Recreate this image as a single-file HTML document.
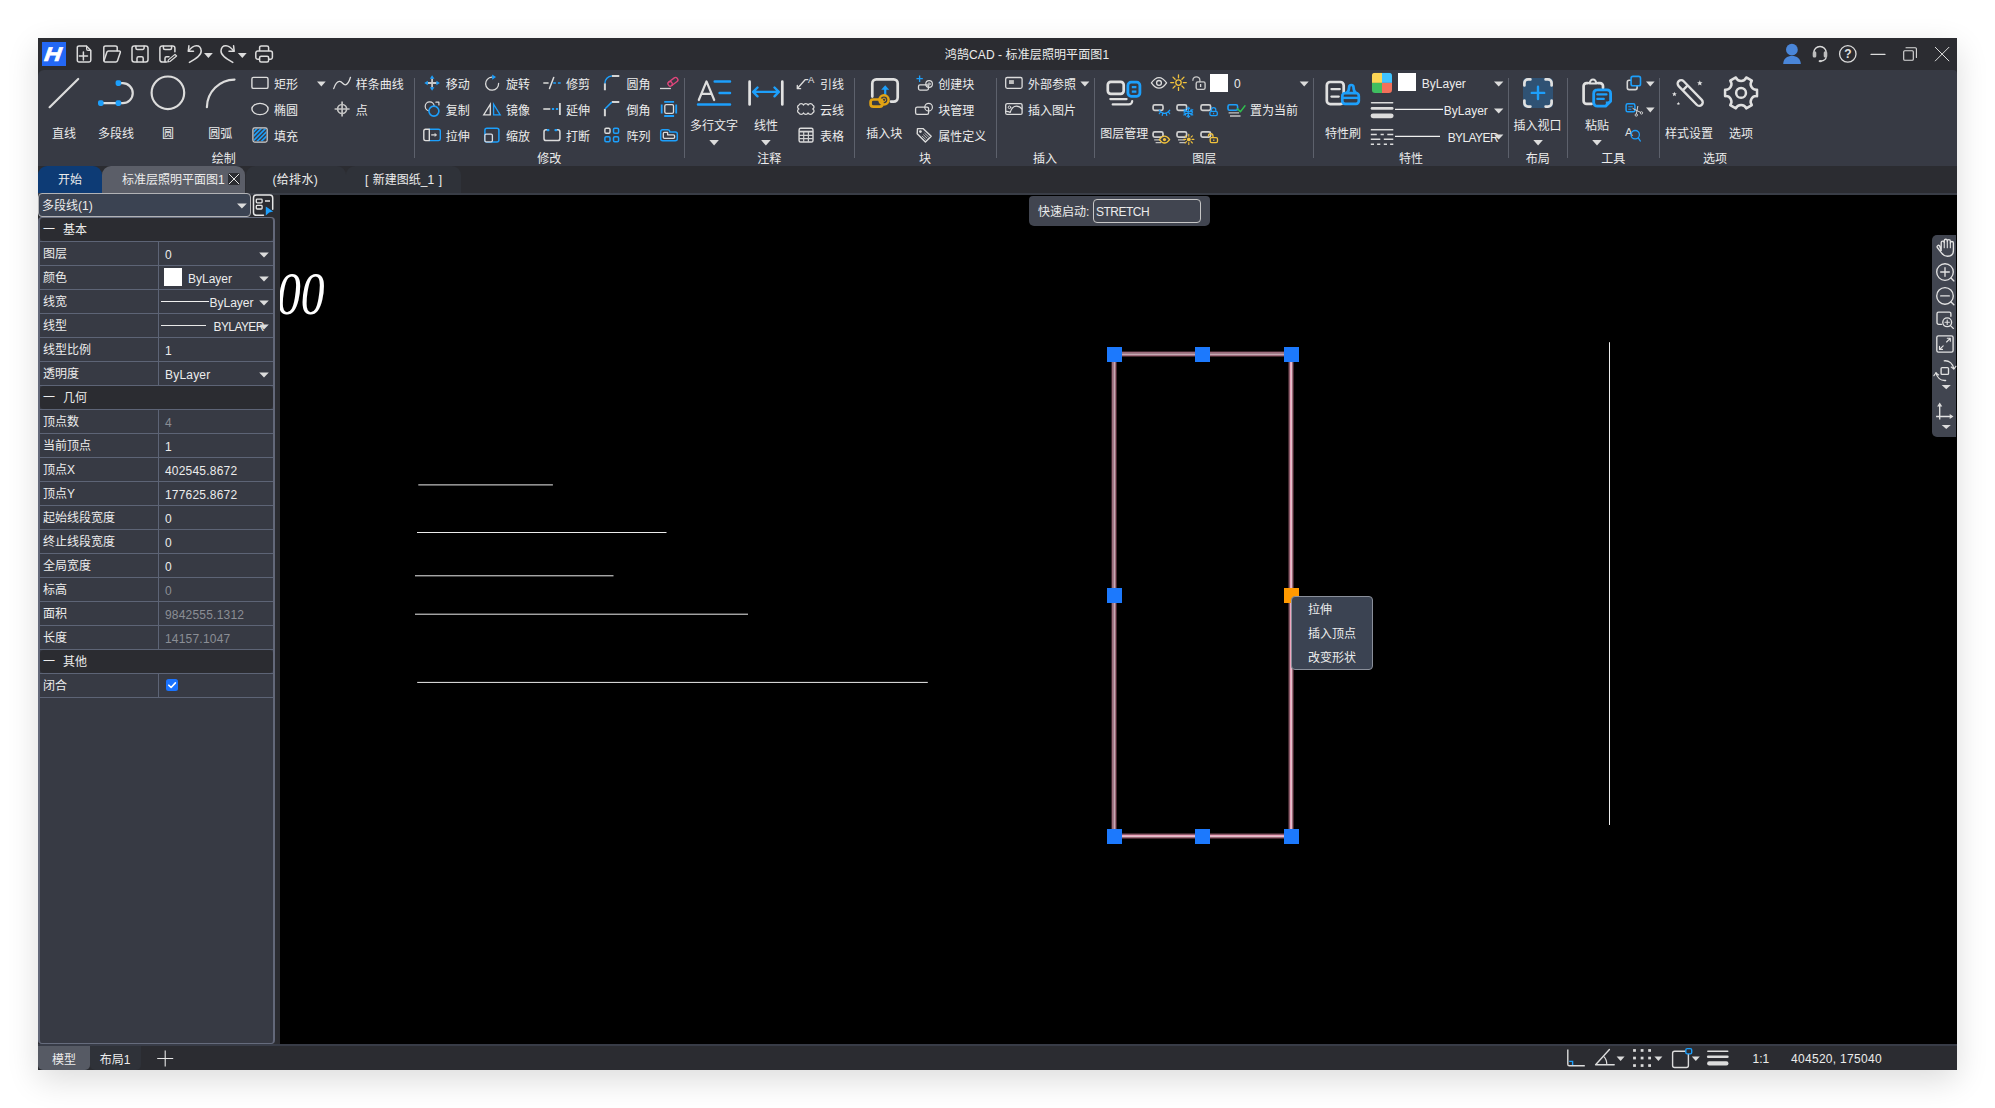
<!DOCTYPE html>
<html lang="zh-CN">
<head>
<meta charset="utf-8">
<title>鸿鹄CAD - 标准层照明平面图1</title>
<style>
html,body{margin:0;padding:0}
body{width:1995px;height:1108px;position:relative;overflow:hidden;background:#fff;
 font-family:"Liberation Sans","Noto Sans CJK SC",sans-serif;font-size:12px;color:#e9e9e9}
.abs,.t,.tc{position:absolute}
.t,.tc{white-space:nowrap;line-height:16px;height:16px;font-size:12px;color:#ececec}
.tc{transform:translateX(-50%)}
#shadow{position:absolute;left:38px;top:38px;width:1919px;height:1032px;background:#2b2c31;
 box-shadow:0 10px 30px rgba(0,0,0,.14)}
#titlebar{position:absolute;left:38px;top:38px;width:1919px;height:32px;background:#2b2c31}
#ribbon{position:absolute;left:38px;top:70px;width:1919px;height:96px;background:#373a44;border-radius:6px 4px 0 0}
#tabbar{position:absolute;left:38px;top:166px;width:1919px;height:27px;background:#2b2c31}
#strip{position:absolute;left:38px;top:193px;width:1919px;height:2px;background:#393d46}
#canvas{position:absolute;left:280px;top:195px;width:1677px;height:849px;background:#000;overflow:hidden}
#leftbg{position:absolute;left:38px;top:193px;width:242px;height:851px;background:#2b2c31}
#statusline{position:absolute;left:38px;top:1044px;width:1919px;height:2px;background:#383c47}
#status{position:absolute;left:38px;top:1046px;width:1919px;height:24px;background:#2b2c31}
svg{position:absolute;left:0;top:0;overflow:visible}
.sep{position:absolute;top:78px;width:1px;height:80px;background:#5d616c}
.g{fill:none;stroke:#dcdcdc;stroke-width:1.4;stroke-linecap:round;stroke-linejoin:round}
.b{fill:none;stroke:#1d9ffb;stroke-width:1.4;stroke-linecap:round;stroke-linejoin:round}
.y{fill:none;stroke:#f2c33c;stroke-width:1.3;stroke-linecap:round;stroke-linejoin:round}
.fg{fill:#dcdcdc;stroke:none}
.fb{fill:#1d9ffb;stroke:none}
.fy{fill:#f2c33c;stroke:none}
.tri{fill:#dcdcdc;stroke:none}
</style>
</head>
<body>
<div id="shadow"></div>
<div id="titlebar"></div>
<div id="ribbon"></div>
<div id="tabbar"></div>
<div id="leftbg"></div>
<div id="strip"></div>
<div id="canvas">
 <div class="abs" id="cadtext" style="left:-3px;top:68px;font-family:'Liberation Serif',serif;font-style:italic;font-size:61px;line-height:61px;color:#fff;transform:scaleX(.78);transform-origin:0 0;white-space:nowrap">00</div>
</div>
<div id="statusline"></div>
<div id="status"></div>

<!-- ===== title bar ===== -->
<div class="abs" style="left:42px;top:42px;width:24px;height:24px;background:#2468f4;overflow:hidden">
 <div class="abs" style="left:1px;top:-1px;width:20px;text-align:center;font:italic bold 20px/26px 'Liberation Sans',sans-serif;color:#fff;-webkit-text-stroke:.7px #fff;transform:scaleX(1.17) skewX(-6deg)">H</div>
</div>
<div class="tc" style="left:1027px;top:47px;letter-spacing:.1px">鸿鹄CAD - 标准层照明平面图1</div>
<svg width="1995" height="1108" viewBox="0 0 1995 1108" style="pointer-events:none">
<g class="g" style="stroke-width:1.5">
 <!-- new -->
 <path d="M79,45.9h7.4l4.4,4.6v9.8a1.7,1.7 0 0 1 -1.7,1.7h-10.1a1.7,1.7 0 0 1 -1.7,-1.7v-12.7a1.7,1.7 0 0 1 1.7,-1.7z"/>
 <path d="M86.6,46.2v2.9a1.3,1.3 0 0 0 1.3,1.3h2.6" style="stroke-width:1.2"/>
 <path d="M79.3,56h8.2M83.4,51.9v8.2"/>
 <!-- open -->
 <path d="M103.8,60.5v-12.9a1.7,1.7 0 0 1 1.7,-1.7h10a1.7,1.7 0 0 1 1.7,1.7v3.2"/>
 <path d="M108.6,50.9h10.6a1.2,1.2 0 0 1 1.1,1.6l-2.8,8.3a1.8,1.8 0 0 1 -1.7,1.2h-10.6a1.2,1.2 0 0 1 -1.1,-1.6l2.8,-8.3a1.8,1.8 0 0 1 1.7,-1.2z"/>
 <!-- save -->
 <rect x="132" y="45.9" width="16" height="16.1" rx="2.2"/>
 <path d="M135.9,46.2v1.8a1.5,1.5 0 0 0 1.5,1.5h5.2a1.5,1.5 0 0 0 1.5,-1.5v-1.8"/>
 <path d="M137,61.8v-3.6a1.5,1.5 0 0 1 1.5,-1.5h3.2a1.5,1.5 0 0 1 1.5,1.5v3.6"/>
 <!-- save as -->
 <path d="M166.5,62h-4.4a2.2,2.2 0 0 1 -2.2,-2.2v-11.7a2.2,2.2 0 0 1 2.2,-2.2h10.6a2.2,2.2 0 0 1 2.2,2.2v3.6"/>
 <path d="M163.4,46.2v1.8a1.5,1.5 0 0 0 1.5,1.5h5.2a1.5,1.5 0 0 0 1.5,-1.5v-1.8"/>
 <path d="M165,61.8v-3.6a1.5,1.5 0 0 1 1.5,-1.5h2.5"/>
 <path d="M175,54.4l1.6,1.6l-6.6,5.5l-2.2,0.5l0.6,-2.1z" style="stroke-width:1.2"/>
 <!-- undo -->
 <path d="M189.4,62.4C196.5,58.2 201.6,55 201.2,50.8C200.9,47.4 198.6,45.7 196.2,45.8C193,45.9 190.2,48.8 188.5,51"/>
 <path d="M188.9,45.8l-0.6,5.5h5.2"/>
 <!-- redo -->
 <path d="M232.8,62.4C225.7,58.2 220.6,55 221,50.8C221.3,47.4 223.6,45.7 226,45.8C229.2,45.9 232,48.8 233.7,51"/>
 <path d="M233.6,45.8l0.6,5.5h-5.2"/>
 <!-- print -->
 <path d="M259.6,50.6v-3a1.7,1.7 0 0 1 1.7,-1.7h5.6a1.7,1.7 0 0 1 1.7,1.7v3"/>
 <path d="M259.4,59.3h-1.5a2.1,2.1 0 0 1 -2.1,-2.1v-4.2a2.1,2.1 0 0 1 2.1,-2.1h12.4a2.1,2.1 0 0 1 2.1,2.1v4.2a2.1,2.1 0 0 1 -2.1,2.1h-1.5"/>
 <rect x="259.6" y="56.2" width="9" height="5.8" rx="1.5"/>
</g>
<path class="tri" d="M204,53h8.8l-4.4,5z"/>
<path class="tri" d="M237.9,53h8.8l-4.4,5z"/>
<!-- right controls -->
<circle cx="1791.9" cy="49.7" r="5.9" fill="#4a86d8"/>
<path d="M1783.2,63.9c0.2,-5.4 3.8,-8 8.8,-8s8.600,2.600 8.800,8z" fill="#4a86d8"/>
<g class="g" style="stroke-width:1.4">
 <path d="M1813.800,54.5v-1.800a6.200,6.200 0 0 1 12.400,0v1.800"/>
 <path d="M1826.200,56.500c0,3 -2.500,4.300 -5.600,4.700" style="stroke-width:1.2"/>
</g>
<rect class="fg" x="1812.700" y="51.200" width="3.600" height="6.300" rx="1.500" style="fill:#bdbdbd"/>
<rect class="fg" x="1823.700" y="51.200" width="3.600" height="6.300" rx="1.500" style="fill:#bdbdbd"/>
<ellipse class="fg" cx="1820.300" cy="61.200" rx="1.700" ry="1.100" style="fill:#cfcfcf"/>
<circle class="g" cx="1847.800" cy="53.900" r="8.200" style="stroke-width:1.300"/>
<path class="g" d="M1871,54.400h14" style="stroke-width:1.100"/>
<rect class="g" x="1903.700" y="50.700" width="9.600" height="9.600" rx="1" style="stroke-width:1.100"/>
<path class="g" d="M1906,47.800h9.400a1,1 0 0 1 1,1v8.600" style="stroke-width:1.100"/>
<path class="g" d="M1935.300,47.300l13.600,13.600M1948.900,47.300l-13.600,13.600" style="stroke-width:1"/>
</svg>
<div class="tc" style="left:1847.800px;top:46px;font-weight:bold;font-size:12px;color:#e0e0e0">?</div>
<!-- ===== ribbon labels ===== -->
<div class="t" style="left:274px;top:77px">矩形</div>
<div class="t" style="left:274px;top:103px">椭圆</div>
<div class="t" style="left:274px;top:129px">填充</div>
<div class="t" style="left:355.8px;top:77px">样条曲线</div>
<div class="t" style="left:355.8px;top:103px">点</div>
<div class="t" style="left:445.8px;top:77px">移动</div>
<div class="t" style="left:445.8px;top:103px">复制</div>
<div class="t" style="left:445.8px;top:129px">拉伸</div>
<div class="t" style="left:506px;top:77px">旋转</div>
<div class="t" style="left:506px;top:103px">镜像</div>
<div class="t" style="left:506px;top:129px">缩放</div>
<div class="t" style="left:566px;top:77px">修剪</div>
<div class="t" style="left:566px;top:103px">延伸</div>
<div class="t" style="left:566px;top:129px">打断</div>
<div class="t" style="left:626.4px;top:77px">圆角</div>
<div class="t" style="left:626.4px;top:103px">倒角</div>
<div class="t" style="left:626.4px;top:129px">阵列</div>
<div class="t" style="left:820px;top:77px">引线</div>
<div class="t" style="left:820px;top:103px">云线</div>
<div class="t" style="left:820px;top:129px">表格</div>
<div class="t" style="left:938.2px;top:77px">创建块</div>
<div class="t" style="left:938.2px;top:103px">块管理</div>
<div class="t" style="left:938.2px;top:129px">属性定义</div>
<div class="t" style="left:1028px;top:77px">外部参照</div>
<div class="t" style="left:1028px;top:103px">插入图片</div>
<div class="t" style="left:1250px;top:103px">置为当前</div>
<div class="t" style="left:1234px;top:76px">0</div>
<div class="t" style="left:1421.8px;top:76px">ByLayer</div>
<div class="t" style="left:1443.8px;top:103px">ByLayer</div>
<div class="t" style="left:1447.7px;top:130px;letter-spacing:-0.600px">BYLAYER</div>
<div class="tc" style="left:64px;top:126px">直线</div>
<div class="tc" style="left:116px;top:126px">多段线</div>
<div class="tc" style="left:168px;top:126px">圆</div>
<div class="tc" style="left:220.2px;top:126px">圆弧</div>
<div class="tc" style="left:714px;top:118px">多行文字</div>
<div class="tc" style="left:766px;top:118px">线性</div>
<div class="tc" style="left:884.2px;top:126px">插入块</div>
<div class="tc" style="left:1124.3px;top:126px">图层管理</div>
<div class="tc" style="left:1343px;top:126px">特性刷</div>
<div class="tc" style="left:1537.5px;top:118px">插入视口</div>
<div class="tc" style="left:1597px;top:118px">粘贴</div>
<div class="tc" style="left:1689px;top:126px">样式设置</div>
<div class="tc" style="left:1741px;top:126px">选项</div>
<div class="tc" style="left:223.8px;top:151px">绘制</div>
<div class="tc" style="left:549.2px;top:151px">修改</div>
<div class="tc" style="left:769.2px;top:151px">注释</div>
<div class="tc" style="left:925px;top:151px">块</div>
<div class="tc" style="left:1044.9px;top:151px">插入</div>
<div class="tc" style="left:1204.3px;top:151px">图层</div>
<div class="tc" style="left:1411px;top:151px">特性</div>
<div class="tc" style="left:1537.8px;top:151px">布局</div>
<div class="tc" style="left:1613.2px;top:151px">工具</div>
<div class="tc" style="left:1715px;top:151px">选项</div>
<div class="sep" style="left:414px"></div>
<div class="sep" style="left:684px"></div>
<div class="sep" style="left:854px"></div>
<div class="sep" style="left:996px"></div>
<div class="sep" style="left:1094px"></div>
<div class="sep" style="left:1313px"></div>
<div class="sep" style="left:1508px"></div>
<div class="sep" style="left:1567px"></div>
<div class="sep" style="left:1659px"></div>
<!-- ===== ribbon icons: draw ===== -->
<svg width="1995" height="1108" viewBox="0 0 1995 1108" style="pointer-events:none">
<g class="g" style="stroke-width:2.2">
 <path d="M49.600,107.200L78.200,79"/>
 <path d="M118.500,83.200h4.300a9.950,9.950 0 0 1 0,19.900h-22"/>
 <circle cx="167.900" cy="92.800" r="16.300"/>
 <path d="M206.900,107.200a27.900,27.900 0 0 1 27.600,-27.600"/>
</g>
<rect class="fb" x="115.600" y="80.300" width="5.600" height="5.600" rx="1.800"/>
<rect class="fb" x="115.600" y="100.300" width="5.600" height="5.600" rx="1.800"/>
<rect class="fb" x="98" y="100.300" width="5.600" height="5.600" rx="1.800"/>
<g class="g">
 <rect x="251.900" y="77.400" width="16.100" height="11" rx="1.500"/>
 <ellipse cx="260" cy="109" rx="8.100" ry="5.600"/>
 <path d="M333.700,88.600c1.500,-4.500 3.600,-7.500 6,-7.300c2.600,0.200 3.400,3.600 5.600,3.500c2.400,-0.100 4,-3.500 5.200,-7.500" style="stroke-width:1.300"/>
</g>
<g class="g" style="stroke:#c4c4c4;stroke-width:1.700;stroke-linecap:butt">
 <circle cx="342.100" cy="109" r="4.500"/>
 <path d="M334.600,109h15M342.100,101.500v15"/>
</g>
<!-- hatch -->
<clipPath id="hc"><rect x="253.700" y="128.600" width="12.700" height="12.700" rx="1"/></clipPath>
<g clip-path="url(#hc)" style="stroke:#1d9ffb;stroke-width:1.700;fill:none">
 <path d="M244,141.500l14,-14M248.300,141.500l14,-14M252.600,141.500l14,-14M256.900,141.500l14,-14M261.200,141.500l14,-14"/>
</g>
<rect x="252.900" y="127.800" width="14.300" height="14.300" rx="1.800" style="fill:none;stroke:#cfcfcf;stroke-width:1.200"/>
<path class="tri" d="M317,81.600h8.700l-4.350,5z"/>
</svg>
<!-- ===== ribbon icons: modify ===== -->
<svg width="1995" height="1108" viewBox="0 0 1995 1108" style="pointer-events:none">
<!-- move -->
<path d="M427.600,83h9M432.100,78.500v9" style="stroke:#c8c8c8;stroke-width:1.800;fill:none"/>
<path class="fb" d="M432.100,75.200l2.300,3.500h-4.600zM432.100,90.800l2.300,-3.500h-4.600zM424.300,83l3.500,-2.300v4.600zM439.900,83l-3.500,-2.300v4.600z"/>
<!-- copy -->
<circle class="g" cx="429.700" cy="106.300" r="4.500" style="stroke-width:1.200"/>
<path class="g" d="M435.900,102.200h3v2.800" style="stroke-width:1.200"/>
<circle cx="433.900" cy="111.100" r="5" style="fill:#373a44;stroke:#1d9ffb;stroke-width:1.600"/>
<!-- stretch -->
<path class="b" d="M429.300,129.300h9.200a1.800,1.800 0 0 1 1.800,1.800v7.700a1.800,1.800 0 0 1 -1.800,1.800h-9.200"/>
<path class="g" d="M429.300,140.600h-3.700a1.800,1.800 0 0 1 -1.800,-1.800v-7.700a1.800,1.800 0 0 1 1.800,-1.800h3.700z"/>
<path d="M431.200,134.900h3.800" style="stroke:#cfcfcf;stroke-width:1.400;fill:none"/>
<path d="M434.600,132.700l2.600,2.200l-2.600,2.200z" style="fill:#cfcfcf"/>
<!-- rotate -->
<path class="g" d="M498.600,83.400a6.500,6.500 0 1 1 -6.800,-6.200" style="stroke-width:1.300"/>
<path class="fb" d="M492.200,74.600l3.800,2.500l-3.800,2.600z"/>
<!-- mirror -->
<path class="g" d="M490.300,104.200v10.700h-6.600z" style="stroke-width:1.300;stroke-linejoin:miter"/>
<path class="b" d="M493.600,104.200v10.700h6.600z" style="stroke-width:1.300;stroke-linejoin:miter"/>
<!-- scale -->
<rect class="b" x="484.900" y="128.300" width="14" height="13.600" rx="2" style="stroke-width:1.500"/>
<rect x="484.900" y="134.200" width="7.500" height="7.700" rx="1.300" style="fill:#373a44;stroke:#d8dde6;stroke-width:1.300"/>
<!-- trim -->
<path d="M543.300,83h5.300" style="stroke:#c8c8c8;stroke-width:1.700;fill:none"/>
<path d="M549.500,88.400l4.200,-11" style="stroke:#dcdcdc;stroke-width:1.500;fill:none;stroke-linecap:round"/>
<path d="M553.200,83h2.700M557.900,83h2.800" style="stroke:#1d9ffb;stroke-width:1.700;fill:none"/>
<!-- extend -->
<path d="M543.300,109h7" style="stroke:#c8c8c8;stroke-width:1.800;fill:none"/>
<path d="M551.900,109h2.200M555.900,109h2.200" style="stroke:#1d9ffb;stroke-width:1.800;fill:none"/>
<path d="M559.900,103v12" style="stroke:#d0d0d0;stroke-width:1.900;fill:none"/>
<!-- break -->
<path class="g" d="M548,129.800h-1.900a2.100,2.100 0 0 0 -2.100,2.100v6.600a2.100,2.100 0 0 0 2.100,2.100h11.700a2.100,2.100 0 0 0 2.100,-2.100v-6.600a2.100,2.100 0 0 0 -2.100,-2.100h-1.800" style="stroke-width:1.500"/>
<rect class="fb" x="546.600" y="128.900" width="2.900" height="2.300" rx="1"/>
<rect class="fb" x="554.400" y="128.900" width="2.900" height="2.300" rx="1"/>
<!-- fillet -->
<path d="M611.800,76.100h7.500M604.900,83.300v6.900" style="stroke:#d4d4d4;stroke-width:2;fill:none"/>
<path d="M604.900,83.300a7.200,7.200 0 0 1 6.900,-7.200" style="stroke:#1d9ffb;stroke-width:1.500;fill:none"/>
<!-- chamfer -->
<path d="M611.800,102.100h7.500M604.900,109v7.200" style="stroke:#d4d4d4;stroke-width:2;fill:none"/>
<path d="M604.900,109l6.900,-6.900" style="stroke:#1d9ffb;stroke-width:1.500;fill:none"/>
<!-- array -->
<rect class="g" x="604.900" y="128.300" width="5.100" height="5" rx="1.200" style="stroke-width:1.400"/>
<rect class="b" x="613.500" y="128.300" width="5.100" height="5" rx="1.200" style="stroke-width:1.500"/>
<rect class="b" x="604.900" y="136.800" width="5.100" height="5" rx="1.200" style="stroke-width:1.500"/>
<rect class="b" x="613.500" y="136.800" width="5.100" height="5" rx="1.200" style="stroke-width:1.500"/>
<!-- eraser -->
<path d="M660,88.500h10.900" style="stroke:#d4d4d4;stroke-width:1.300;fill:none"/>
<g transform="rotate(-37 672.900 81.800)" style="fill:none;stroke:#e2467c;stroke-width:1.300">
 <rect x="667.400" y="79.500" width="11" height="4.600" rx="2"/>
 <path d="M669.300,79.500a2.300,2.300 0 0 1 0,4.600"/>
</g>
<!-- offset -->
<rect class="g" x="664.800" y="104.600" width="8.700" height="8.700" rx="1.400" style="stroke-width:1.300"/>
<path d="M664.200,101.900h9.900M664.200,116h9.900M661.700,104.400v9.100M676.200,104.400v9.100" style="stroke:#1d9ffb;stroke-width:1.800;fill:none"/>
<!-- group -->
<path class="b" d="M662.700,129.700h5.200a1.800,1.800 0 0 1 1.700,1.300l0.300,1h5.400a2,2 0 0 1 2,2v4.700a2,2 0 0 1 -2,2h-12.600a2,2 0 0 1 -2,-2v-7a2,2 0 0 1 2,-2z" style="stroke-width:1.500"/>
<path class="g" d="M664.400,132.300h3.200v2.500h5.900a1.100,1.100 0 0 1 1.100,1.100v1.400a1.100,1.100 0 0 1 -1.100,1.100h-9.100a1.100,1.100 0 0 1 -1.100,-1.100v-3.900a1.100,1.100 0 0 1 1.100,-1.100z" style="stroke-width:1.300"/>
</svg>
<!-- ===== ribbon icons: annotate / block / insert ===== -->
<svg width="1995" height="1108" viewBox="0 0 1995 1108" style="pointer-events:none">
<!-- mtext -->
<path d="M698.800,100l7.700,-18.600l7.700,18.600M701.700,93.800h9.600" style="fill:none;stroke:#dedede;stroke-width:2.200;stroke-linejoin:round;stroke-linecap:round"/>
<path d="M714.700,81.500h15.300M719.600,93h10.400M698,104.400h32" style="fill:none;stroke:#1d9ffb;stroke-width:2.500;stroke-linecap:round"/>
<!-- linear dim -->
<path d="M749.600,81.700v22.800M782.300,81.700v22.800" style="fill:none;stroke:#e2e2e2;stroke-width:2.700;stroke-linecap:round"/>
<path d="M753.500,91.900h25M757.500,87.500l-4.300,4.400l4.300,4.400M774.500,87.500l4.300,4.400l-4.300,4.400" style="fill:none;stroke:#1d9ffb;stroke-width:2.400;stroke-linecap:round;stroke-linejoin:round"/>
<path class="tri" d="M709.300,140.100h9.600l-4.800,5.500z"/>
<path class="tri" d="M761.100,140.100h9.600l-4.800,5.500z"/>
<!-- leader -->
<path class="g" d="M797.600,88.300l7.500,-8.600h2.700" style="stroke-width:1.300"/>
<path class="g" d="M797.300,85.300v3.400h3.300" style="stroke-width:1.300"/>
<text x="808.100" y="82.900" style="font-family:'Liberation Sans',sans-serif;font-size:9.500px;fill:#e2e2e2">A</text>
<!-- cloud -->
<path class="g" d="M798.900,105.100a2.500,2.300 0 0 1 4.600,0a2.500,2.300 0 0 1 4.600,0a2.500,2.300 0 0 1 4.600,0a2.100,2.100 0 0 1 0,3.900a2.100,2.100 0 0 1 0,3.900a2.500,2.300 0 0 1 -4.600,0a2.500,2.300 0 0 1 -4.600,0a2.500,2.300 0 0 1 -4.600,0a2.100,2.100 0 0 1 0,-3.900a2.100,2.100 0 0 1 0,-3.900z" style="stroke-width:1.300"/>
<!-- table -->
<rect class="g" x="799.100" y="128.300" width="13.900" height="13.700" rx="1.600" style="stroke-width:1.400"/>
<path d="M799.100,131.600h13.900" style="stroke:#d6d6d6;stroke-width:1.800;fill:none"/>
<path d="M799.100,135.300h13.900M799.100,138.700h13.900M803.700,131.600v10.400M808.400,131.600v10.400" style="stroke:#d0d0d0;stroke-width:1.200;fill:none"/>
<!-- insert block -->
<path d="M872.300,96.600v-13.200a4,4 0 0 1 4,-4h17.400a4,4 0 0 1 4,4v14.200a4,4 0 0 1 -4,4h-2.800" style="fill:none;stroke:#e0e0e0;stroke-width:2.700;stroke-linecap:round"/>
<path d="M885.200,95v-6.500" style="fill:none;stroke:#1d9ffb;stroke-width:2.200"/>
<path d="M885.200,85.300l4,4.400h-8z" style="fill:#1d9ffb"/>
<rect x="870.600" y="99.500" width="11.800" height="7.100" rx="2.600" style="fill:none;stroke:#e2a313;stroke-width:2.700"/>
<circle cx="884" cy="99.800" r="4.600" style="fill:none;stroke:#e2a313;stroke-width:2.500"/>
<circle cx="884" cy="99.800" r="1.700" style="fill:none;stroke:#e2a313;stroke-width:1"/>
<!-- create block -->
<path d="M916.500,78.700h6.300M919.600,75.600v6.300" style="fill:none;stroke:#1d9ffb;stroke-width:1.300"/>
<rect class="g" x="918.500" y="84.900" width="10" height="5.200" rx="1.500" style="stroke-width:1.300"/>
<circle class="g" cx="929.100" cy="84" r="3.300" style="stroke-width:1.200"/>
<circle class="g" cx="929.100" cy="84" r="1.100" style="stroke-width:0.900"/>
<!-- block manager -->
<rect class="g" x="915.600" y="107.100" width="13" height="7.200" rx="1.600" style="stroke-width:1.300"/>
<circle class="g" cx="928.600" cy="107.200" r="3.800" style="stroke-width:1.200"/>
<!-- attribute tag -->
<path class="g" d="M917.500,128.600h5.500l8.200,7.600l-5.800,5.700l-8.200,-8.200z" style="stroke-width:1.400"/>
<circle cx="920.400" cy="131.600" r="1.400" class="fg"/>
<path d="M924.500,133.100l4.300,4M923.200,134.500l4.100,3.800M921.900,135.900l3.900,3.600" style="stroke:#d8d8d8;stroke-width:0.800;fill:none"/>
<!-- xref -->
<rect class="g" x="1005.700" y="77.500" width="16.400" height="10.800" rx="1.500" style="stroke-width:1.300"/>
<rect x="1009" y="80.100" width="4.900" height="3.900" style="fill:#bdbdbd"/>
<path class="tri" d="M1080.400,81.600h9l-4.500,5z"/>
<!-- image -->
<rect class="g" x="1005.700" y="103.600" width="16.400" height="10.800" rx="1.500" style="stroke-width:1.300"/>
<circle class="g" cx="1009.500" cy="107.300" r="1.300" style="stroke-width:1"/>
<path class="g" d="M1006,111.400c1.500,-0.200 3,0.400 4.200,1c1.200,-4 3.300,-6.300 6.200,-6.300c2.400,0 4.300,1.300 5.500,2.900" style="stroke-width:1.200"/>
</svg>
<!-- ===== ribbon icons: layers ===== -->
<svg width="1995" height="1108" viewBox="0 0 1995 1108" style="pointer-events:none">
<!-- layer manager -->
<rect x="1107.800" y="81.800" width="15.900" height="12" rx="3" style="fill:none;stroke:#e0e0e0;stroke-width:2.700"/>
<path d="M1110.300,99.100h16.300M1112.700,104.400h16.200a3.300,3.300 0 0 0 3.300,-3.300" style="fill:none;stroke:#e0e0e0;stroke-width:2.200;stroke-linecap:round"/>
<rect x="1127.900" y="82.200" width="12" height="14.100" rx="3.200" style="fill:#373a44;stroke:#1d9ffb;stroke-width:2.800"/>
<path d="M1131.800,87.100h4.600M1131.800,91.700h4.600" style="fill:none;stroke:#1d9ffb;stroke-width:2.200"/>
<!-- eye -->
<path class="g" d="M1151.400,82.900c2.400,-3.400 4.800,-5.300 7.600,-5.300s5.200,1.900 7.600,5.300c-2.400,3.400 -4.800,5.300 -7.600,5.300s-5.200,-1.900 -7.600,-5.300z" style="stroke-width:1.300"/>
<circle class="g" cx="1159" cy="82.900" r="2.400" style="stroke-width:1.300"/>
<!-- sun -->
<g class="y" style="stroke-width:1.300">
 <circle cx="1178.500" cy="82.600" r="2.700"/>
 <path d="M1178.500,74.800v3M1178.500,87.400v3M1170.700,82.600h3M1183.300,82.600h3M1173,77.100l2.100,2.100M1181.900,86l2.100,2.100M1173,88.100l2.100,-2.100M1181.900,79.200l2.100,-2.100"/>
</g>
<!-- unlock grey -->
<rect class="g" x="1196.200" y="81.900" width="8.900" height="7.500" rx="1.600" style="stroke-width:1.400;stroke:#c9c9c9"/>
<path class="g" d="M1192.900,80.300a3.500,3.500 0 0 1 7,0v1.500" style="stroke-width:1.300;stroke:#c9c9c9"/>
<path d="M1200.600,84v3" style="stroke:#dcdcdc;stroke-width:1.300;fill:none"/>
<rect x="1210" y="74" width="18" height="18" style="fill:#fff"/>
<path class="tri" d="M1299.700,81.600h9l-4.500,5z"/>
<!-- row 2 -->
<g style="fill:none;stroke:#cfcfcf;stroke-width:1.700">
 <rect x="1153.100" y="104.800" width="9.900" height="5.500" rx="1.600"/>
 <rect x="1177" y="104.800" width="9.600" height="5.500" rx="1.600"/>
 <rect x="1201" y="104.800" width="9.600" height="5.500" rx="1.600"/>
 <rect x="1153.100" y="131.800" width="9.900" height="5.300" rx="1.600"/>
 <rect x="1177" y="131.800" width="9.600" height="5.300" rx="1.600"/>
 <rect x="1201" y="131.800" width="9.600" height="5.300" rx="1.600"/>
</g>
<path d="M1154.200,139.900h7M1155.600,142.600h5.600M1178,139.900h7M1179.400,142.600h5.600" style="fill:none;stroke:#bdbdbd;stroke-width:1.200"/>
<!-- closed eye blue -->
<path d="M1159.200,110.200c1.500,2.200 3.300,3.200 5.300,3.200s3.800,-1 5.300,-3.200M1160.500,112l-1.200,1.700M1162.800,113.200l-0.600,2.300M1166.200,113.200l0.600,2.300M1168.500,112l1.200,1.700" style="fill:none;stroke:#1d9ffb;stroke-width:1.200;stroke-linecap:round"/>
<rect x="1159.500" y="109" width="10" height="2" style="fill:#373a44;opacity:0"/>
<!-- snow -->
<g style="fill:none;stroke:#1d9ffb;stroke-width:1.100;stroke-linecap:round">
 <path d="M1188.300,107.100v10.400M1183.800,109.700l9,5.200M1183.800,114.900l9,-5.200"/>
 <path d="M1186.900,108l1.400,1.300l1.400,-1.300M1186.900,116.600l1.400,-1.300l1.400,1.300M1184,111.700l1.800,-0.500l-0.400,-1.800M1192.600,112.900l-1.800,0.500l0.400,1.800M1184,112.900l1.800,0.500l-0.400,1.800M1192.600,111.700l-1.800,-0.500l0.400,-1.800"/>
</g>
<!-- lock blue -->
<rect x="1209.900" y="111.300" width="7.400" height="4.400" rx="1.400" style="fill:#373a44;stroke:#1d9ffb;stroke-width:1.300"/>
<path d="M1211.400,111.200v-1.400a2.200,2.200 0 0 1 4.400,0v1.400" style="fill:none;stroke:#1d9ffb;stroke-width:1.200"/>
<path d="M1213.600,112.800v1.500" style="fill:none;stroke:#1d9ffb;stroke-width:1.100"/>
<!-- set current -->
<rect x="1228" y="104.800" width="9.600" height="5.500" rx="1.600" style="fill:none;stroke:#1d9ffb;stroke-width:1.600"/>
<path d="M1228.600,112.800h10.500M1230,116h10.500" style="fill:none;stroke:#c4c4c4;stroke-width:1.300"/>
<path d="M1237.400,108.700l3,3l4.600,-5.900" style="fill:none;stroke:#2fc14e;stroke-width:1.400;stroke-linecap:round;stroke-linejoin:round"/>
<!-- yellow eye -->
<path d="M1159.400,139.600c1.600,-2.300 3.300,-3.400 5.100,-3.400s3.500,1.100 5.100,3.400c-1.600,2.300 -3.300,3.400 -5.100,3.400s-3.500,-1.100 -5.100,-3.400z" style="fill:#373a44;stroke:#f2c33c;stroke-width:1.300"/>
<circle cx="1164.500" cy="139.600" r="1.600" class="fy"/>
<!-- yellow sun -->
<g style="fill:none;stroke:#f2c33c;stroke-width:1.100;stroke-linecap:round">
 <path d="M1188.800,134.300v1.900M1188.800,142.600v1.900M1183.700,139.400h1.900M1192,139.400h1.900M1185.200,135.800l1.300,1.300M1191.100,141.700l1.300,1.300M1185.200,143l1.300,-1.300M1191.100,137.100l1.300,-1.300"/>
</g>
<circle cx="1188.800" cy="139.400" r="1.900" class="fy"/>
<!-- yellow unlock -->
<rect x="1210.200" y="137.700" width="7.300" height="4.900" rx="1.400" style="fill:#373a44;stroke:#f2c33c;stroke-width:1.300"/>
<path d="M1208.400,136.400v-0.500a2.300,2.300 0 0 1 4.600,0v1.700" style="fill:none;stroke:#f2c33c;stroke-width:1.300"/>
<path d="M1213.800,139.400v1.500" style="fill:none;stroke:#f2c33c;stroke-width:1.100"/>
</svg>
<!-- ===== ribbon icons: properties / layout / tools / options ===== -->
<svg width="1995" height="1108" viewBox="0 0 1995 1108" style="pointer-events:none">
<!-- match properties -->
<rect x="1326.800" y="82" width="16.900" height="22.100" rx="3.400" style="fill:none;stroke:#e0e0e0;stroke-width:2.700"/>
<path d="M1331.400,89.100h8.400M1331.400,96.600h7.400" style="fill:none;stroke:#e0e0e0;stroke-width:2.200;stroke-linecap:round"/>
<path d="M1346.400,93.300c2,-1.500 2.700,-3.300 2.700,-6.100a2.200,2.200 0 0 1 4.400,0c0,2.800 0.700,4.600 2.700,6.100" style="fill:#373a44;stroke:#1d9ffb;stroke-width:2.700;stroke-linejoin:round"/>
<rect x="1342.300" y="93.200" width="16.500" height="10.600" rx="2.800" style="fill:#373a44;stroke:#1d9ffb;stroke-width:2.700"/>
<path d="M1342.300,97.900h16.500" style="fill:none;stroke:#1d9ffb;stroke-width:2.400"/>
<!-- palette -->
<clipPath id="pc"><rect x="1371.900" y="72.800" width="20.100" height="20.100" rx="3.200"/></clipPath>
<g clip-path="url(#pc)">
 <rect x="1371.900" y="72.800" width="10.100" height="10.100" style="fill:#fdd655"/>
 <rect x="1382" y="72.800" width="10.100" height="10.100" style="fill:#40c4ff"/>
 <rect x="1371.900" y="82.900" width="10.100" height="10.100" style="fill:#3fbe60"/>
 <rect x="1382" y="82.900" width="10.100" height="10.100" style="fill:#f3705a"/>
</g>
<rect x="1398" y="73" width="18" height="18" style="fill:#fff"/>
<!-- lineweight -->
<path d="M1371.500,102.700h21.200" style="fill:none;stroke:#dcdcdc;stroke-width:1.400;stroke-linecap:round"/>
<path d="M1372,108.400h20.200" style="fill:none;stroke:#dcdcdc;stroke-width:2.600;stroke-linecap:round"/>
<path d="M1373,115.800h18.200" style="fill:none;stroke:#dcdcdc;stroke-width:4.800;stroke-linecap:round"/>
<path d="M1395,109.400h48M1395,136.400h45" style="fill:none;stroke:#f0f0f0;stroke-width:1.100"/>
<!-- linetype -->
<g style="fill:none;stroke:#dcdcdc;stroke-width:1.500">
 <path d="M1370.800,129.700h22.500"/>
 <path d="M1370.800,134.400h6M1380.600,134.400h3.200M1387.300,134.400h6"/>
 <path d="M1370.800,139.300h9.500M1383.800,139.300h9.500"/>
 <path d="M1370.800,144.300h3.200M1377.100,144.300h3.200M1383.800,144.300h3.200M1390.100,144.300h3.200"/>
</g>
<path class="tri" d="M1494,81.600h9.400l-4.700,5z"/>
<path class="tri" d="M1494,108.600h9.400l-4.700,5z"/>
<path class="tri" d="M1494,134.600h9.400l-4.700,5z"/>
<!-- viewport -->
<rect x="1523" y="78" width="30" height="30" rx="4" style="fill:#2f5274"/>
<path d="M1524.400,85.400v-2.400a3.600,3.600 0 0 1 3.600,-3.600h2.400M1551.600,85.400v-2.400a3.600,3.600 0 0 0 -3.600,-3.600h-2.400M1524.400,100.600v2.400a3.600,3.600 0 0 0 3.600,3.600h2.400M1551.600,100.600v2.400a3.600,3.600 0 0 1 -3.600,3.600h-2.400" style="fill:none;stroke:#e0e0e0;stroke-width:2.700;stroke-linecap:round"/>
<path d="M1531.800,92.900h12.400M1538,86.700v12.400" style="fill:none;stroke:#1d9ffb;stroke-width:2.400;stroke-linecap:round"/>
<path class="tri" d="M1533.300,140.100h9.600l-4.800,5.500z"/>
<!-- paste -->
<path d="M1588,83.100h-1.400a3,3 0 0 0 -3,3v14.800a3,3 0 0 0 3,3h5M1598,83.100h2a3,3 0 0 1 3,3v2" style="fill:none;stroke:#e0e0e0;stroke-width:2.700;stroke-linecap:round"/>
<path d="M1589.600,83.600c0.400,-2.400 1.500,-4 3.400,-4s3,1.600 3.400,4z" style="fill:none;stroke:#e0e0e0;stroke-width:2;stroke-linejoin:round"/>
<path d="M1597.300,89.800h9.700a3.600,3.600 0 0 1 3.600,3.600v7.800l-5,5h-8.300a3.600,3.600 0 0 1 -3.600,-3.600v-9.200a3.600,3.600 0 0 1 3.600,-3.600z" style="fill:#373a44;stroke:#1d9ffb;stroke-width:2.800;stroke-linejoin:round"/>
<path d="M1597.300,94.400h9.200M1597.300,98.900h6.500" style="fill:none;stroke:#1d9ffb;stroke-width:2.200;stroke-linecap:round"/>
<path d="M1610,101.500h-4.200v4.200z" style="fill:#1d9ffb"/>
<path class="tri" d="M1592.200,140.100h9.600l-4.800,5.500z"/>
<!-- copy -->
<rect x="1627.300" y="80.200" width="9.800" height="9.400" rx="1.800" style="fill:none;stroke:#d4d4d4;stroke-width:1.600"/>
<rect x="1631.100" y="76.400" width="9.400" height="9.400" rx="1.800" style="fill:#373a44;stroke:#1d9ffb;stroke-width:1.600"/>
<path class="tri" d="M1646,81.600h8.600l-4.300,4.800z"/>
<!-- cut -->
<rect x="1626.100" y="103.800" width="8.800" height="8" rx="1.600" style="fill:none;stroke:#1d9ffb;stroke-width:1.500"/>
<path d="M1628.300,106.700h4.400M1628.300,109.300h3" style="fill:none;stroke:#1d9ffb;stroke-width:1.100"/>
<path d="M1633,108.600l7.600,3.800M1637.800,106.400l-1.400,7.400" style="fill:none;stroke:#d4d4d4;stroke-width:1;stroke-linecap:round"/>
<circle cx="1636.300" cy="115" r="1.200" style="fill:none;stroke:#d4d4d4;stroke-width:0.900"/>
<circle cx="1641.500" cy="112.900" r="1.200" style="fill:none;stroke:#d4d4d4;stroke-width:0.900"/>
<path class="tri" d="M1646,107.600h8.600l-4.300,4.800z"/>
<!-- find -->
<text x="1624.900" y="136.400" style="font-family:'Liberation Sans',sans-serif;font-size:11.500px;fill:#dcdcdc">A</text>
<circle cx="1635.200" cy="134.700" r="4.200" style="fill:none;stroke:#1d9ffb;stroke-width:1.300"/>
<path d="M1638.300,137.800l2,3.200" style="fill:none;stroke:#1d9ffb;stroke-width:1.400;stroke-linecap:round"/>
<!-- style settings (wand) -->
<g transform="rotate(45.900 1690.200 93)" style="fill:none;stroke:#e0e0e0;stroke-width:2.400">
 <rect x="1673.700" y="89.500" width="33" height="7" rx="3.500"/>
 <path d="M1683,89.500v7"/>
</g>
<path d="M1699.80,80.30L1700.56,82.15L1702.56,82.30L1701.04,83.60L1701.50,85.55L1699.80,84.50L1698.10,85.55L1698.56,83.60L1697.04,82.30L1699.04,82.15z" style="fill:#e0e0e0"/>
<path d="M1674.40,91.70L1675.05,93.31L1676.78,93.43L1675.45,94.54L1675.87,96.22L1674.40,95.30L1672.93,96.22L1673.35,94.54L1672.02,93.43L1673.75,93.31z" style="fill:#e0e0e0"/>
<path d="M1678.40,101.80L1678.87,102.95L1680.11,103.04L1679.16,103.85L1679.46,105.06L1678.40,104.40L1677.34,105.06L1677.64,103.85L1676.69,103.04L1677.93,102.95z" style="fill:#e0e0e0"/>
<!-- gear -->
<path d="M1757.02,89.65L1757.02,96.15A5.6,5.6 0 0 0 1751.85,105.11L1746.22,108.36A5.6,5.6 0 0 0 1735.88,108.36L1730.25,105.11A5.6,5.6 0 0 0 1725.08,96.15L1725.08,89.65A5.6,5.6 0 0 0 1730.25,80.69L1735.88,77.44A5.6,5.6 0 0 0 1746.22,77.44L1751.85,80.69A5.6,5.6 0 0 0 1757.02,89.65z" style="fill:none;stroke:#e0e0e0;stroke-width:2.500;stroke-linejoin:round"/>
<circle cx="1741.050" cy="92.900" r="4.900" style="fill:none;stroke:#e0e0e0;stroke-width:2.500"/>
</svg>
<!-- ===== document tabs ===== -->
<div class="abs" style="left:38px;top:166px;width:64px;height:27px;background:#0d3b75;border-radius:9px 9px 0 0"></div>
<div class="abs" style="left:102px;top:166px;width:143px;height:27px;background:#5b5e68;border-radius:9px 9px 0 0"></div>
<div class="abs" style="left:246px;top:166px;width:100px;height:27px;background:#2f3239;border-radius:9px 9px 0 0"></div>
<div class="abs" style="left:346px;top:166px;width:115px;height:27px;background:#2f3239;border-radius:9px 9px 0 0"></div>
<div class="tc" style="left:70px;top:172px">开始</div>
<div class="t" style="left:122px;top:172px">标准层照明平面图1</div>
<div class="abs" style="left:228px;top:173px;width:12px;height:12px;background:#2b2c31"></div>
<div class="t" style="left:272.500px;top:172px;letter-spacing:.3px">(给排水)</div>
<div class="t" style="left:365px;top:172px;word-spacing:1.200px">[ 新建图纸_1 ]</div>
<svg width="1995" height="1108" viewBox="0 0 1995 1108" style="pointer-events:none">
<path d="M228.800,173.800l10.400,10.400M239.200,173.800l-10.400,10.400" style="fill:none;stroke:#e4e4e4;stroke-width:1"/>
</svg>
<!-- ===== properties panel ===== -->
<style>
#combo{position:absolute;left:38px;top:193px;width:211px;height:22px;border:1px solid #b2b3b6;border-radius:4px;background:#3b4352}
#ptable{position:absolute;left:38px;top:217px;width:233px;height:825px;border:1px solid #666c7d;border-left:2px solid #636879;border-right:2px solid #636879;border-radius:4px;background:#373a44;overflow:hidden}
.ph{position:absolute;left:0;width:233px;height:23px;background:#2b2c31;border-radius:4px}
.pl{position:absolute;left:0;width:233px;height:1px;background:#5d6476}
.pv{position:absolute;left:118px;width:1px;background:#5d6476}
.pt{position:absolute;white-space:nowrap;line-height:16px;height:16px;font-size:12px;color:#ececec}
.dis{color:#8b8e95}
</style>
<div id="combo"></div>
<div class="t" style="left:42px;top:198px">多段线(1)</div>
<div id="ptable">
<div class="ph" style="top:0px"></div>
<div class="pt" style="left:3px;top:4px">一</div><div class="pt" style="left:23px;top:4px">基本</div>
<div class="pl" style="top:23px"></div>
<div class="pt" style="left:3px;top:28px">图层</div>
<div class="pt" style="left:125px;top:29px;letter-spacing:.2px">0</div>
<div class="pl" style="top:47px"></div>
<div class="pt" style="left:3px;top:52px">颜色</div>
<div class="abs" style="left:124px;top:50px;width:18px;height:18px;background:#fff"></div>
<div class="pt" style="left:148px;top:53px">ByLayer</div>
<div class="pl" style="top:71px"></div>
<div class="pt" style="left:3px;top:76px">线宽</div>
<div class="abs" style="left:121px;top:83px;width:48px;height:1px;background:#f0f0f0"></div>
<div class="pt" style="left:169.5px;top:77px">ByLayer</div>
<div class="pl" style="top:95px"></div>
<div class="pt" style="left:3px;top:100px">线型</div>
<div class="abs" style="left:121px;top:107px;width:45px;height:1px;background:#e8e8e8"></div>
<div class="pt" style="left:173.5px;top:101px;letter-spacing:-.6px">BYLAYER</div>
<div class="pl" style="top:119px"></div>
<div class="pt" style="left:3px;top:124px">线型比例</div>
<div class="pt" style="left:125px;top:125px;letter-spacing:.2px">1</div>
<div class="pl" style="top:143px"></div>
<div class="pt" style="left:3px;top:148px">透明度</div>
<div class="pt" style="left:125px;top:149px;letter-spacing:.2px">ByLayer</div>
<div class="pl" style="top:167px"></div>
<div class="pv" style="top:24px;height:143px"></div>
<div class="ph" style="top:168px"></div>
<div class="pt" style="left:3px;top:172px">一</div><div class="pt" style="left:23px;top:172px">几何</div>
<div class="pl" style="top:191px"></div>
<div class="pt" style="left:3px;top:196px">顶点数</div>
<div class="pt dis" style="left:125px;top:197px;letter-spacing:.2px">4</div>
<div class="pl" style="top:215px"></div>
<div class="pt" style="left:3px;top:220px">当前顶点</div>
<div class="pt" style="left:125px;top:221px;letter-spacing:.2px">1</div>
<div class="pl" style="top:239px"></div>
<div class="pt" style="left:3px;top:244px">顶点X</div>
<div class="pt" style="left:125px;top:245px;letter-spacing:.2px">402545.8672</div>
<div class="pl" style="top:263px"></div>
<div class="pt" style="left:3px;top:268px">顶点Y</div>
<div class="pt" style="left:125px;top:269px;letter-spacing:.2px">177625.8672</div>
<div class="pl" style="top:287px"></div>
<div class="pt" style="left:3px;top:292px">起始线段宽度</div>
<div class="pt" style="left:125px;top:293px;letter-spacing:.2px">0</div>
<div class="pl" style="top:311px"></div>
<div class="pt" style="left:3px;top:316px">终止线段宽度</div>
<div class="pt" style="left:125px;top:317px;letter-spacing:.2px">0</div>
<div class="pl" style="top:335px"></div>
<div class="pt" style="left:3px;top:340px">全局宽度</div>
<div class="pt" style="left:125px;top:341px;letter-spacing:.2px">0</div>
<div class="pl" style="top:359px"></div>
<div class="pt" style="left:3px;top:364px">标高</div>
<div class="pt dis" style="left:125px;top:365px;letter-spacing:.2px">0</div>
<div class="pl" style="top:383px"></div>
<div class="pt" style="left:3px;top:388px">面积</div>
<div class="pt dis" style="left:125px;top:389px;letter-spacing:.2px">9842555.1312</div>
<div class="pl" style="top:407px"></div>
<div class="pt" style="left:3px;top:412px">长度</div>
<div class="pt dis" style="left:125px;top:413px;letter-spacing:.2px">14157.1047</div>
<div class="pl" style="top:431px"></div>
<div class="pv" style="top:192px;height:239px"></div>
<div class="ph" style="top:432px"></div>
<div class="pt" style="left:3px;top:436px">一</div><div class="pt" style="left:23px;top:436px">其他</div>
<div class="pl" style="top:455px"></div>
<div class="pt" style="left:3px;top:460px">闭合</div>
<div class="abs" style="left:126px;top:461px;width:12px;height:12px;border-radius:2.500px;background:#1a73ff"></div>
<div class="pl" style="top:479px"></div>
<div class="pv" style="top:456px;height:23px"></div>
</div>
<svg width="1995" height="1108" viewBox="0 0 1995 1108" style="pointer-events:none">
<path class="tri" d="M237,203.400h9.800l-4.900,5.200z"/>
<path d="M263.500,215.300h-7.200a2.800,2.800 0 0 1 -2.800,-2.800v-14.600a2.800,2.800 0 0 1 2.800,-2.800h13.600a2.800,2.800 0 0 1 2.800,2.800v11.400" style="fill:none;stroke:#e6e6e6;stroke-width:1.500;stroke-linecap:round"/>
<rect x="256.300" y="199.200" width="5.800" height="3.600" rx="0.800" style="fill:none;stroke:#e6e6e6;stroke-width:1.300"/>
<rect x="256.300" y="205.400" width="5.800" height="3.600" rx="0.800" style="fill:none;stroke:#e6e6e6;stroke-width:1.300"/>
<path d="M265,201h5" style="fill:none;stroke:#e6e6e6;stroke-width:1.500"/>
<path d="M265.800,206.400l7.400,5.200l-4,1l-3.400,3z" style="fill:#1d9ffb"/>
<path class="tri" d="M259.200,252.6h9.600l-4.800,5z"/>
<path class="tri" d="M259.200,276.6h9.600l-4.800,5z"/>
<path class="tri" d="M259.200,300.6h9.600l-4.800,5z"/>
<path class="tri" d="M259.200,324.6h9.600l-4.800,5z"/>
<path class="tri" d="M259.200,372.6h9.600l-4.800,5z"/>
<path d="M168.8,685.2l2.300,2.300l4.300,-4.600" style="fill:none;stroke:#fff;stroke-width:1.600;stroke-linecap:round;stroke-linejoin:round"/>
</svg>
<!-- ===== canvas drawing ===== -->
<svg width="1995" height="1108" viewBox="0 0 1995 1108" style="pointer-events:none">
<g style="fill:none;stroke:#ececec;stroke-width:1">
 <path d="M418.300,484.900H552.900"/>
 <path d="M417,532.500H666.500"/>
 <path d="M415,575.800H613.500"/>
 <path d="M415,614.200H748"/>
 <path d="M417.200,682.400H927.800"/>
 <path d="M1609.500,342.200V825"/>
</g>
<g shape-rendering="crispEdges">
 <rect x="1111" y="354" width="1" height="483" fill="#3a252b"/>
 <rect x="1112" y="354" width="1" height="483" fill="#9c6c7c"/>
 <rect x="1113" y="354" width="1" height="483" fill="#a07c88"/>
 <rect x="1114" y="354" width="1" height="483" fill="#c6a8b3"/>
 <rect x="1115" y="354" width="1" height="483" fill="#9e6a7a"/>
 <rect x="1116" y="354" width="1" height="483" fill="#45292f"/>
 <rect x="1288" y="354" width="1" height="483" fill="#40282f"/>
 <rect x="1289" y="354" width="1" height="483" fill="#8c5b69"/>
 <rect x="1290" y="354" width="1" height="483" fill="#efa6bf"/>
 <rect x="1291" y="354" width="1" height="483" fill="#dfc0c9"/>
 <rect x="1292" y="354" width="1" height="483" fill="#9a6777"/>
 <rect x="1293" y="354" width="1" height="483" fill="#45292f"/>
 <rect x="1114" y="351" width="177" height="1" fill="#3a252b"/>
 <rect x="1114" y="352" width="177" height="1" fill="#9c6c7c"/>
 <rect x="1114" y="353" width="177" height="1" fill="#a07c88"/>
 <rect x="1114" y="354" width="177" height="1" fill="#c6a8b3"/>
 <rect x="1114" y="355" width="177" height="1" fill="#9e6a7a"/>
 <rect x="1114" y="356" width="177" height="1" fill="#45292f"/>
 <rect x="1114" y="833" width="177" height="1" fill="#40282f"/>
 <rect x="1114" y="834" width="177" height="1" fill="#8c5b69"/>
 <rect x="1114" y="835" width="177" height="1" fill="#efa6bf"/>
 <rect x="1114" y="836" width="177" height="1" fill="#dfc0c9"/>
 <rect x="1114" y="837" width="177" height="1" fill="#9a6777"/>
 <rect x="1114" y="838" width="177" height="1" fill="#45292f"/>
</g>
<g style="fill:#1c79fd">
 <rect x="1107" y="347" width="15" height="15"/><rect x="1195" y="347" width="15" height="15"/><rect x="1284" y="347" width="15" height="15"/>
 <rect x="1107" y="588" width="15" height="15"/>
 <rect x="1107" y="829" width="15" height="15"/><rect x="1195" y="829" width="15" height="15"/><rect x="1284" y="829" width="15" height="15"/>
</g>
<rect x="1284" y="588" width="15" height="15" style="fill:#ff9900"/>
</svg>
<!-- quick launch -->
<div class="abs" style="left:1029px;top:196px;width:181px;height:30px;background:#414550;border-radius:4px 4px 5px 5px"></div>
<div class="t" style="left:1038px;top:204px">快速启动:</div>
<div class="abs" style="left:1093px;top:199px;width:106px;height:22px;border:1px solid #c6c6c6;border-radius:4px"></div>
<div class="t" style="left:1096px;top:204px;letter-spacing:-.5px">STRETCH</div>
<!-- grip context menu -->
<div class="abs" style="left:1291px;top:596px;width:80px;height:72px;border:1px solid #8a8f9a;border-radius:4px;background:#3b4352"></div>
<div class="t" style="left:1308px;top:602px">拉伸</div>
<div class="t" style="left:1308px;top:626px">插入顶点</div>
<div class="t" style="left:1308px;top:650px">改变形状</div>
<!-- nav bar -->
<div class="abs" style="left:1932px;top:235px;width:24px;height:202px;background:#414550;border-radius:5px 0 0 5px"></div>
<svg width="1995" height="1108" viewBox="0 0 1995 1108" style="pointer-events:none">
<g class="g" style="stroke-width:1.350;stroke:#e2e2e2">
 <!-- hand -->
 <path d="M1941.200,250.400V242.600a1.520,1.520 0 0 1 3.050,0V240.800a1.520,1.520 0 0 1 3.050,0V241.200a1.520,1.520 0 0 1 3.050,0V243a1.520,1.520 0 0 1 3.050,0V250.500c0,3.900 -2.400,5.700 -6,5.700c-2.900,0 -4.300,-1 -5.700,-3.100l-4.400,-5.600a1.400,1.400 0 0 1 2.200,-1.700z"/>
 <path d="M1944.250,242.600v5.200M1947.300,241.200v6.600M1950.350,243v4.800" style="stroke-width:1.100"/>
 <!-- zoom in -->
 <circle cx="1945" cy="272" r="8.300"/>
 <path d="M1951,278l2.900,2.900M1940.700,272h8.600M1945,267.700v8.600"/>
 <!-- zoom out -->
 <circle cx="1945" cy="295.900" r="8.300"/>
 <path d="M1951,301.900l2.900,2.900M1940.700,295.900h8.600"/>
 <!-- zoom window -->
 <path d="M1941.600,324.300h-3a1.600,1.600 0 0 1 -1.600,-1.600v-9a1.600,1.600 0 0 1 1.600,-1.600h10.700a1.600,1.600 0 0 1 1.600,1.600v2.600"/>
 <circle cx="1947.200" cy="322.300" r="4.400"/>
 <path d="M1950.500,325.600l2.900,2.900M1945,322.300h4.400M1947.200,320.100v4.400" style="stroke-width:1.100"/>
 <!-- fit -->
 <rect x="1936.800" y="335.800" width="16.300" height="16.300" rx="1.700"/>
 <path d="M1946.600,342l3.600,-3.600M1947.300,338.200h3v3M1943.200,345.800l-3.600,3.600M1939.500,346.400v3h3" style="stroke-width:1.150"/>
 <!-- orbit -->
 <rect x="1941.100" y="367.600" width="7.400" height="6.800" rx="1"/>
 <path d="M1944.200,360.800c5,-0.400 8.600,3 9.600,7.900M1945.600,380.500c-5,0.400 -8.600,-3 -9.600,-7.900"/>
 <path d="M1955.900,366.300l-2,2.700l-2.700,-2M1933.900,375.700l2,-2.700l2.700,2" style="stroke-width:1.150"/>
 <!-- ucs -->
 <path d="M1939.700,419.600v-15M1936.100,416.500h15.500" style="stroke-linecap:butt"/>
</g>
<path class="tri" d="M1937.100,406.400l2.600,-3.800l2.600,3.800zM1949.700,413.900l3.800,2.600l-3.800,2.600z"/>
<path class="tri" d="M1941.700,385.100h9.100l-4.550,4.200z"/>
<path class="tri" d="M1941.700,424.900h9.100l-4.550,4.200z"/>
</svg>
<!-- ===== status bar ===== -->
<div class="abs" style="left:38px;top:1046px;width:52px;height:24px;background:#565a64;border-radius:0 0 5px 5px"></div>
<div class="abs" style="left:90px;top:1046px;width:51px;height:24px;background:#2f3239;border-radius:0 0 5px 5px"></div>
<div class="tc" style="left:64px;top:1052px">模型</div>
<div class="tc" style="left:115px;top:1052px">布局1</div>
<div class="t" style="left:1752.500px;top:1051px">1:1</div>
<div class="t" style="left:1791px;top:1051px;letter-spacing:.3px">404520, 175040</div>
<svg width="1995" height="1108" viewBox="0 0 1995 1108" style="pointer-events:none">
<path d="M157.200,1058.500h16M165.200,1050.500v16" style="fill:none;stroke:#e6e6e6;stroke-width:1.100"/>
<g class="g" style="stroke-width:1.400;stroke:#dcdcdc;stroke-linecap:butt">
 <path d="M1567.800,1049.400v14.800a1.600,1.600 0 0 0 1.600,1.600h15.400"/>
 <path d="M1595.600,1064.800h18.600M1595.600,1064.800l13.800,-15.300" style="stroke-linecap:round"/>
 <path d="M1603.600,1056.400c2.200,2 3.300,4.800 3.200,8.400" style="stroke-width:1.200"/>
 <rect x="1672.600" y="1051.300" width="15.800" height="16.200" rx="2"/>
</g>
<path d="M1569.200,1061.400h3.400v3.600" style="fill:none;stroke:#1d9ffb;stroke-width:1.400"/>
<g style="fill:#dcdcdc">
 <rect x="1633.1" y="1049.1" width="2.800" height="2.700"/><rect x="1640.7" y="1049.1" width="2.800" height="2.700"/><rect x="1648.2" y="1049.1" width="2.800" height="2.700"/>
 <rect x="1633.1" y="1056.7" width="2.800" height="2.700"/><rect x="1640.7" y="1056.7" width="2.800" height="2.700"/><rect x="1648.2" y="1056.7" width="2.800" height="2.700"/>
 <rect x="1633.1" y="1064.2" width="2.800" height="2.700"/><rect x="1640.7" y="1064.2" width="2.800" height="2.700"/><rect x="1648.2" y="1064.2" width="2.800" height="2.700"/>
</g>
<rect x="1685.800" y="1048.600" width="5.900" height="5.300" rx="1.400" style="fill:#2b2c31;stroke:#1d9ffb;stroke-width:1.400"/>
<path d="M1707.800,1051.200h20" style="fill:none;stroke:#dcdcdc;stroke-width:1.400;stroke-linecap:round"/>
<path d="M1708.200,1056.800h19.200" style="fill:none;stroke:#dcdcdc;stroke-width:2.600;stroke-linecap:round"/>
<path d="M1709.200,1063.400h17.200" style="fill:none;stroke:#dcdcdc;stroke-width:4.200;stroke-linecap:round"/>
<path class="tri" d="M1616.600,1056.600h8l-4,4.400z"/>
<path class="tri" d="M1654.400,1056.600h8l-4,4.400z"/>
<path class="tri" d="M1691.800,1056.600h8l-4,4.400z"/>
</svg>
</body>
</html>
